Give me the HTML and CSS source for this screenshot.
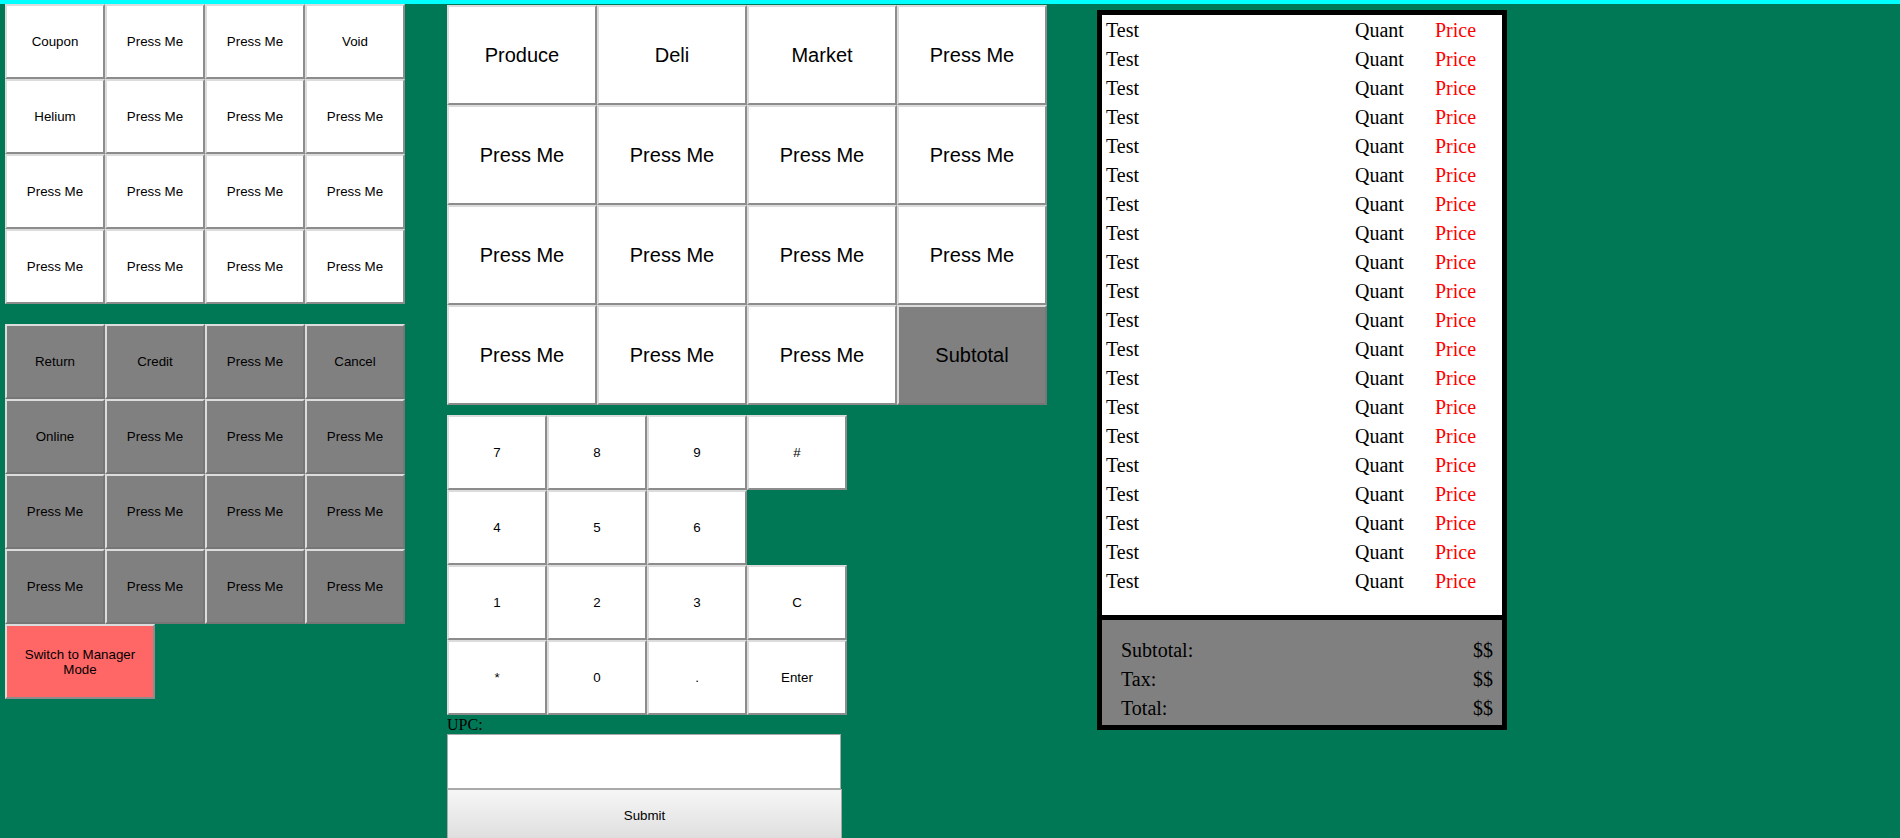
FILE: index.html
```html
<!DOCTYPE html>
<html>
<head>
<meta charset="utf-8">
<link rel="stylesheet" href="styles.css">
</head>
<body>
<div class="topbar"></div>
<div class="layout">
  <div class="col-left">
    <div class="grid-small">
      <button class="btn">Coupon</button><button class="btn">Press Me</button><button class="btn">Press Me</button><button class="btn">Void</button>
      <button class="btn">Helium</button><button class="btn">Press Me</button><button class="btn">Press Me</button><button class="btn">Press Me</button>
      <button class="btn">Press Me</button><button class="btn">Press Me</button><button class="btn">Press Me</button><button class="btn">Press Me</button>
      <button class="btn">Press Me</button><button class="btn">Press Me</button><button class="btn">Press Me</button><button class="btn">Press Me</button>
    </div>
    <div class="grid-small grid-gray">
      <button class="btn gray">Return</button><button class="btn gray">Credit</button><button class="btn gray">Press Me</button><button class="btn gray">Cancel</button>
      <button class="btn gray">Online</button><button class="btn gray">Press Me</button><button class="btn gray">Press Me</button><button class="btn gray">Press Me</button>
      <button class="btn gray">Press Me</button><button class="btn gray">Press Me</button><button class="btn gray">Press Me</button><button class="btn gray">Press Me</button>
      <button class="btn gray">Press Me</button><button class="btn gray">Press Me</button><button class="btn gray">Press Me</button><button class="btn gray">Press Me</button>
    </div>
    <button class="btn manager">Switch to Manager Mode</button>
  </div>
  <div class="col-mid">
    <div class="grid-big">
      <button class="btn big">Produce</button><button class="btn big">Deli</button><button class="btn big">Market</button><button class="btn big">Press Me</button>
      <button class="btn big">Press Me</button><button class="btn big">Press Me</button><button class="btn big">Press Me</button><button class="btn big">Press Me</button>
      <button class="btn big">Press Me</button><button class="btn big">Press Me</button><button class="btn big">Press Me</button><button class="btn big">Press Me</button>
      <button class="btn big">Press Me</button><button class="btn big">Press Me</button><button class="btn big">Press Me</button><button class="btn big gray">Subtotal</button>
    </div>
    <div class="numpad">
      <button class="btn">7</button><button class="btn">8</button><button class="btn">9</button><button class="btn">#</button>
      <button class="btn">4</button><button class="btn">5</button><button class="btn">6</button><span class="empty"></span>
      <button class="btn">1</button><button class="btn">2</button><button class="btn">3</button><button class="btn">C</button>
      <button class="btn">*</button><button class="btn">0</button><button class="btn">.</button><button class="btn">Enter</button>
    </div>
    <label class="upc-label">UPC:</label>
    <input class="upc-input" type="text">
    <button class="submit">Submit</button>
  </div>
  <div class="col-right">
    <div class="receipt">
      <div class="items">
        <div class="item"><span>Test</span><span>Quant</span><span class="price">Price</span></div>
        <div class="item"><span>Test</span><span>Quant</span><span class="price">Price</span></div>
        <div class="item"><span>Test</span><span>Quant</span><span class="price">Price</span></div>
        <div class="item"><span>Test</span><span>Quant</span><span class="price">Price</span></div>
        <div class="item"><span>Test</span><span>Quant</span><span class="price">Price</span></div>
        <div class="item"><span>Test</span><span>Quant</span><span class="price">Price</span></div>
        <div class="item"><span>Test</span><span>Quant</span><span class="price">Price</span></div>
        <div class="item"><span>Test</span><span>Quant</span><span class="price">Price</span></div>
        <div class="item"><span>Test</span><span>Quant</span><span class="price">Price</span></div>
        <div class="item"><span>Test</span><span>Quant</span><span class="price">Price</span></div>
        <div class="item"><span>Test</span><span>Quant</span><span class="price">Price</span></div>
        <div class="item"><span>Test</span><span>Quant</span><span class="price">Price</span></div>
        <div class="item"><span>Test</span><span>Quant</span><span class="price">Price</span></div>
        <div class="item"><span>Test</span><span>Quant</span><span class="price">Price</span></div>
        <div class="item"><span>Test</span><span>Quant</span><span class="price">Price</span></div>
        <div class="item"><span>Test</span><span>Quant</span><span class="price">Price</span></div>
        <div class="item"><span>Test</span><span>Quant</span><span class="price">Price</span></div>
        <div class="item"><span>Test</span><span>Quant</span><span class="price">Price</span></div>
        <div class="item"><span>Test</span><span>Quant</span><span class="price">Price</span></div>
        <div class="item"><span>Test</span><span>Quant</span><span class="price">Price</span></div>
      </div>
      <div class="totals">
        <div class="total-row"><span>Subtotal:</span><span>$$</span></div>
        <div class="total-row"><span>Tax:</span><span>$$</span></div>
        <div class="total-row"><span>Total:</span><span>$$</span></div>
      </div>
    </div>
  </div>
</div>
</body>
</html>
```
FILE: styles.css
```css
html, body {
  margin: 0;
  padding: 0;
  background: #007856;
  font-family: "Liberation Serif", "Times New Roman", serif;
  font-size: 16px;
  height: 100%;
  overflow: hidden;
}
.topbar {
  height: 4px;
  background: #00ffff;
}
.layout {
  display: flex;
  align-items: flex-start;
}
.btn {
  box-sizing: border-box;
  margin: 0;
  padding: 1px 6px;
  font-family: "Liberation Sans", Arial, sans-serif;
  font-size: 13.333px;
  color: #000;
  background: #ffffff;
  border-width: 2px;
  border-style: solid;
  border-color: #dcdcdc #8c8c8c #8c8c8c #dcdcdc;
  width: 100%;
  height: 100%;
}
.btn.gray {
  background: #808080;
  border-color: #dcdcdc #767676 #767676 #dcdcdc;
}
.col-left {
  width: 400px;
  margin-left: 5px;
  display: flex;
  flex-direction: column;
}
.grid-small {
  display: grid;
  grid-template-columns: repeat(4, 100px);
  grid-auto-rows: 75px;
}
.grid-gray {
  margin-top: 20px;
}
.manager {
  width: 150px;
  height: 75px;
  background: #ff6666;
  border-color: #dcdcdc #8c8c8c #8c8c8c #dcdcdc;
}
.col-mid {
  width: 600px;
  margin-left: 42px;
  margin-top: 1px;
  display: flex;
  flex-direction: column;
}
.grid-big {
  display: grid;
  grid-template-columns: repeat(4, 150px);
  grid-auto-rows: 100px;
}
.btn.big {
  font-size: 20px;
}
.numpad {
  margin-top: 10px;
  display: grid;
  grid-template-columns: repeat(4, 100px);
  grid-auto-rows: 75px;
}
.upc-label {
  display: block;
  height: 19px;
  line-height: 19px;
  font-size: 16px;
}
.upc-input {
  box-sizing: border-box;
  margin: 0;
  width: 394px;
  height: 55px;
  border: 1px solid #a9a9a9;
  background: #fff;
}
.submit {
  box-sizing: border-box;
  margin: 0;
  width: 395px;
  height: 52px;
  border: 1px solid #a9a9a9;
  background: linear-gradient(#f6f6f6, #dedede);
  font-family: "Liberation Sans", Arial, sans-serif;
  font-size: 13.333px;
  color: #000;
}
.col-right {
  margin-left: 50px;
  margin-top: 6px;
}
.receipt {
  width: 400px;
  border: 5px solid #000;
}
.items {
  height: 599px;
  padding-top: 1px;
  background: #fff;
  border-bottom: 5px solid #000;
  font-size: 20px;
}
.item {
  display: grid;
  grid-template-columns: 249px 80px 1fr;
  height: 29px;
  line-height: 29px;
  padding-left: 4px;
  color: #000;
}
.price {
  color: #ff0000;
}
.totals {
  box-sizing: border-box;
  height: 105px;
  background: #808080;
  padding: 16px 9px 0 19px;
  font-size: 20px;
}
.total-row {
  display: flex;
  justify-content: space-between;
  height: 29px;
  line-height: 29px;
  color: #000;
}
```
